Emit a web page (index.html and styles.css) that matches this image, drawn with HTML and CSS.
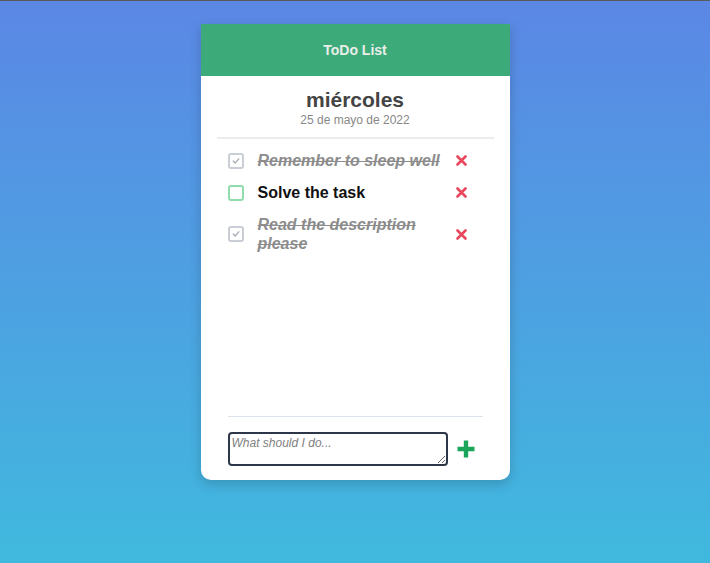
FILE: index.html
```html
<!DOCTYPE html>
<html lang="es">
<head>
<meta charset="utf-8">
<title>ToDo List</title>
<link rel="stylesheet" href="styles.css">
</head>
<body>
<div class="card">
  <header class="card-header">ToDo List</header>
  <section class="day">
    <h2 class="day-name">miércoles</h2>
    <div class="day-date">25 de mayo de 2022</div>
  </section>
  <ul class="tasks">
    <li class="task done">
      <span class="box"><svg width="10" height="10" viewBox="0 0 10 10"><path d="M2.2 5 L4.2 7 L7.8 2.8" fill="none" stroke="#a6aab2" stroke-width="1.3" stroke-linecap="round" stroke-linejoin="round"/></svg></span>
      <span class="label">Remember to sleep well</span>
      <button class="del" aria-label="delete"><svg width="11" height="11" viewBox="0 0 11 11"><path d="M1.5 1.5 L9.5 9.5 M9.5 1.5 L1.5 9.5" stroke="#e8485c" stroke-width="2.6" stroke-linecap="round"/></svg></button>
    </li>
    <li class="task">
      <span class="box todo"></span>
      <span class="label">Solve the task</span>
      <button class="del" aria-label="delete"><svg width="11" height="11" viewBox="0 0 11 11"><path d="M1.5 1.5 L9.5 9.5 M9.5 1.5 L1.5 9.5" stroke="#e8485c" stroke-width="2.6" stroke-linecap="round"/></svg></button>
    </li>
    <li class="task done">
      <span class="box"><svg width="10" height="10" viewBox="0 0 10 10"><path d="M2.2 5 L4.2 7 L7.8 2.8" fill="none" stroke="#a6aab2" stroke-width="1.3" stroke-linecap="round" stroke-linejoin="round"/></svg></span>
      <span class="label">Read the description please</span>
      <button class="del" aria-label="delete"><svg width="11" height="11" viewBox="0 0 11 11"><path d="M1.5 1.5 L9.5 9.5 M9.5 1.5 L1.5 9.5" stroke="#e8485c" stroke-width="2.6" stroke-linecap="round"/></svg></button>
    </li>
  </ul>
  <footer class="card-footer">
    <textarea class="new-task" placeholder="What should I do..."></textarea>
    <button class="add" aria-label="add"><svg width="18" height="18" viewBox="0 0 18 18"><path d="M9 0.5 V17.5 M0.5 9 H17.5" stroke="#1ba55b" stroke-width="4.4"/></svg></button>
  </footer>
</div>
</body>
</html>
```
FILE: styles.css
```css
html {
  height: 100%;
  background: linear-gradient(180deg, #5b87e5 0%, #40b9de 100%);
}
body {
  margin: 0;
  min-height: 100%;
  box-sizing: border-box;
  border-top: 1px solid #5a5a5a;
  display: flex;
  justify-content: center;
  align-items: flex-start;
  font-family: "Liberation Sans", Arial, sans-serif;
}
.card {
  margin-top: 23px;
  width: 309px;
  height: 456px;
  background: #fff;
  border-radius: 0 0 10px 10px;
  box-shadow: 0 4px 12px rgba(0, 0, 0, 0.18);
  display: flex;
  flex-direction: column;
}
.card-header {
  height: 52px;
  background: #3dab79;
  color: #e9eeea;
  font-weight: bold;
  font-size: 14px;
  display: flex;
  align-items: center;
  justify-content: center;
}
.day {
  margin: 0 16px;
  padding: 12px 0 10px;
  border-bottom: 2px solid #ececec;
  text-align: center;
}
.day-name {
  margin: 0;
  font-size: 21px;
  line-height: 24px;
  color: #444;
}
.day-date {
  margin-top: 1px;
  font-size: 12px;
  line-height: 14px;
  color: #888;
}
.tasks {
  list-style: none;
  margin: 0;
  padding: 6px 16px 0 27px;
  flex: 1;
}
.task {
  display: flex;
  align-items: center;
  padding: 6px 0 7px;
}
.box {
  width: 16px;
  height: 16px;
  box-sizing: border-box;
  border: 2px solid #c9cdd5;
  border-radius: 3px;
  display: flex;
  align-items: center;
  justify-content: center;
  flex: none;
}
.box.todo {
  border-color: #8fdcad;
}
.label {
  flex: 0 0 186px;
  margin: 0 12px 0 14px;
  font-size: 16px;
  line-height: 19px;
  font-weight: bold;
  color: #111;
}
.task.done .label {
  color: #8c8c8c;
  font-style: italic;
  text-decoration: line-through;
}
.del, .add {
  border: 0;
  background: none;
  padding: 0;
  display: flex;
  cursor: pointer;
}
.card-footer {
  margin: 0 27px;
  padding: 15px 0 14px;
  border-top: 1px solid #dde3ea;
  display: flex;
  align-items: center;
  gap: 9px;
}
.new-task {
  width: 220px;
  height: 34px;
  box-sizing: border-box;
  margin: 0;
  padding: 2px;
  border: 2px solid #2d3748;
  border-radius: 4px;
  font-family: "Liberation Sans", Arial, sans-serif;
  font-size: 12px;
}
.new-task::placeholder {
  font-style: italic;
  color: #808080;
}
```
